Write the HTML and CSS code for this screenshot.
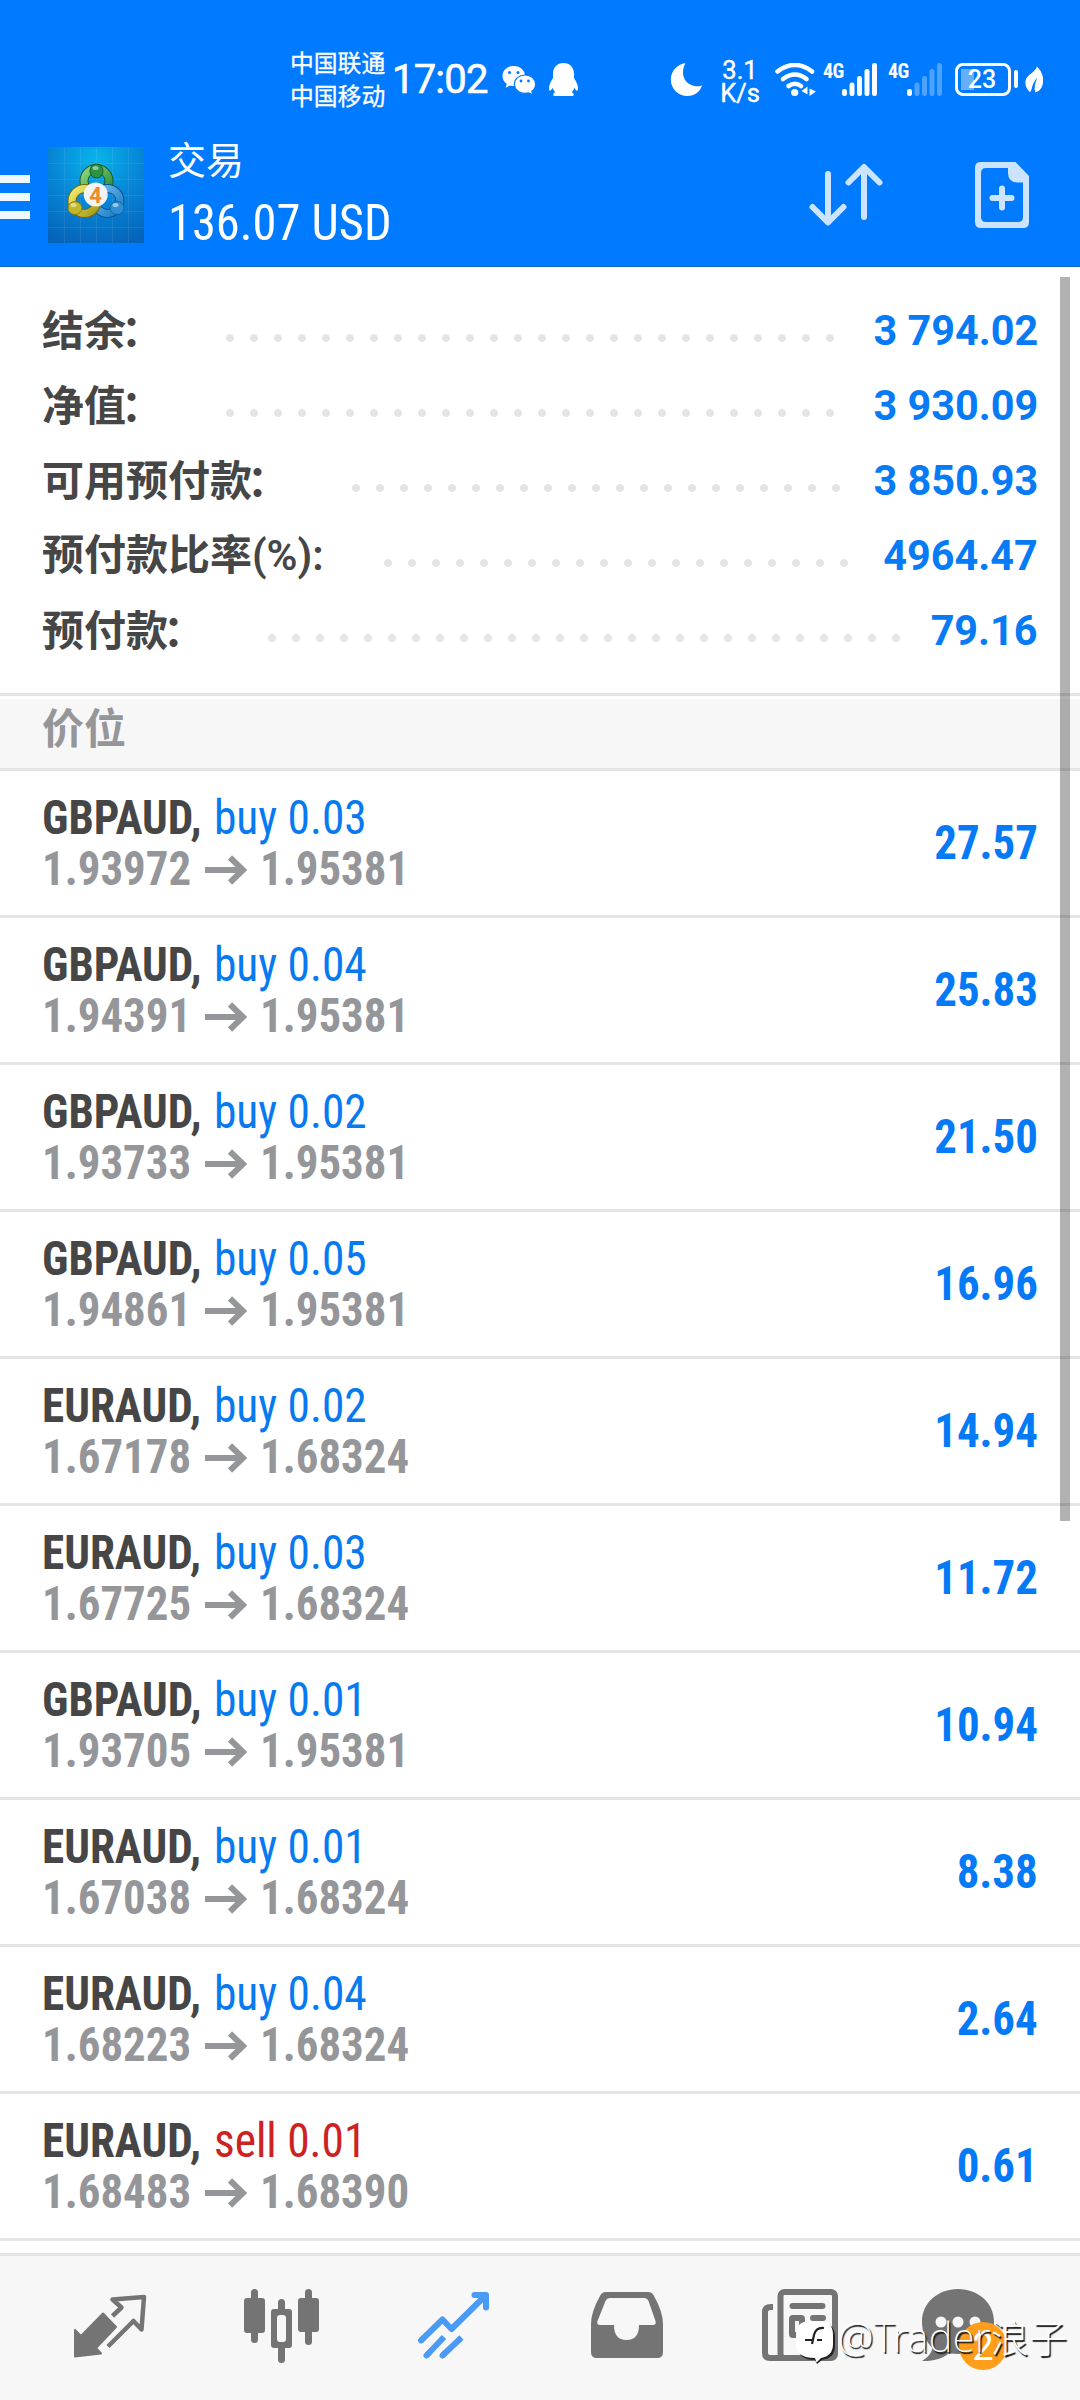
FILE: index.html
```html
<!DOCTYPE html>
<html lang="zh-CN">
<head>
<meta charset="utf-8">
<title>交易</title>
<link rel="stylesheet" href="styles.css">
</head>
<body>
<svg class="defs" width="0" height="0">
  <symbol id="arrow" viewBox="0 0 42 30"><path d="M0 15H38M25 2.5L38 15L25 27.5" fill="none" stroke="#95969a" stroke-width="6"/></symbol>
</svg>
<div class="screen">
  <header class="header">
    <div class="status">
      <div class="carriers"><span>中国联通</span><span>中国移动</span></div>
      <span class="clock">17:02</span>
      <svg class="wechat" width="34" height="30" viewBox="502 65 34 30">
        <path fill="#fff" d="M514 66c-6.500 0-11.500 4.400-11.500 10 0 3.200 1.600 6 4.200 7.800l-1 4 4.300-2.300c1.200.4 2.600.5 4 .5C520 86 525 81.500 525 76S520.300 66 514 66z"/>
        <path fill="#fff" stroke="#007aff" stroke-width="1.200" d="M525 75c-6 0-10.600 4-10.600 9.200S519 93.400 525 93.400c1.200 0 2.400-.2 3.500-.5l4.200 2-.9-3.600c2.400-1.700 3.800-4.200 3.800-7.100 0-5.200-4.700-9.200-10.600-9.200z"/>
        <g fill="#007aff"><circle cx="509.500" cy="72.500" r="1.500"/><circle cx="518" cy="72.500" r="1.500"/><circle cx="521" cy="81" r="1.400"/><circle cx="528.500" cy="81" r="1.400"/></g>
      </svg>
      <svg class="qq" width="30" height="34" viewBox="549 63 30 34">
        <path fill="#fff" d="M563.500 63c-6.500 0-10.500 4.500-10.500 11v4c-2 3-4 7-4 10 0 2 .5 3 1.200 2.700.9-.3 1.900-1.700 2.500-2.900.5 1.700 1.300 3.200 2.600 4.500-1.500.7-2.200 1.600-2 2.700.1.700.8 1 1.700 1h17c.9 0 1.600-.3 1.700-1 .2-1.100-.5-2-2-2.700 1.300-1.300 2.100-2.800 2.600-4.500.6 1.200 1.600 2.600 2.500 2.900.7.3 1.200-.7 1.200-2.700 0-3-2-7-4-10v-4c0-6.500-4-11-10.500-11z"/>
      </svg>
      <svg class="moon" width="32" height="34" viewBox="670 63 32 34"><path fill="#fff" d="M685.500 63c-8.500 1.500-14.700 8.200-14.700 16.700 0 9 7.400 16.300 16.600 16.300 7.300 0 13-4.200 14.600-10.800-2.200 1.200-4.300 1.300-6.500 1-7.700-1-12.800-7-12.500-14.200.1-3.300 1-6.300 2.500-9z"/></svg>
      <div class="speed"><span>3.1</span><span>K/s</span></div>
      <svg class="wifi" width="41" height="34" viewBox="775 63 41 34">
        <g fill="none" stroke="#fff" stroke-width="4.600" stroke-linecap="round"><path d="M777.500 71.500Q795 58.500 812 71.500"/><path d="M783 79Q795 70 806.500 79"/><path d="M788.500 86Q795 81.500 801 86"/></g>
        <circle cx="794.700" cy="92.500" r="3.600" fill="#fff"/><path fill="#fff" d="M807.500 86.500v8l-6-3.500zM809.500 88.500l6.500 3-6.500 4.500z"/>
      </svg>
      <span class="net">4G</span>
      <svg width="36" height="34" viewBox="842 63 36 34"><g fill="#fff"><rect x="842" y="89" width="5" height="7" rx="2.300"/><rect x="849.500" y="82.500" width="5" height="13.500" rx="2.300"/><rect x="857" y="76" width="5" height="20" rx="2.300"/><rect x="864.500" y="69" width="5" height="27" rx="2.300"/><rect x="872" y="63" width="5" height="33" rx="2.300"/></g></svg>
      <span class="net net2">4G</span>
      <svg width="36" height="34" viewBox="842 63 36 34"><rect x="842" y="89" width="5" height="7" rx="2.300" fill="#fff"/><g fill="#4da2ff"><rect x="849.500" y="82.500" width="5" height="13.500" rx="2.300"/><rect x="857" y="76" width="5" height="20" rx="2.300"/><rect x="864.500" y="69" width="5" height="27" rx="2.300"/><rect x="872" y="63" width="5" height="33" rx="2.300"/></g></svg>
      <div class="battery"><span>23</span></div>
      <i class="nub"></i>
      <svg class="leaf" width="18" height="28" viewBox="1025 66 18 28"><path fill="#fff" d="M1037 66.500c4 4 6.500 9 6.200 14.500-.3 6-3.500 10.500-8 11.300l-.6-3c.2-4 1-8 3-12-3.500 4-5.400 8-6.100 12.500l-1.500 2.500c-3.500-3.500-5-7-4.500-11.500.8-6 9.500-8 11.500-14.300z"/></svg>
    </div>
    <div class="toolbar">
      <div class="menu"><i></i><i></i><i></i></div>
      <svg class="logo" width="96" height="96" viewBox="48 147 96 96">
        <defs>
          <radialGradient id="bg" cx=".5" cy=".12" r=".95"><stop offset="0" stop-color="#08b4ea"/><stop offset=".5" stop-color="#0785d6"/><stop offset="1" stop-color="#0563b8"/></radialGradient>
          <linearGradient id="gr" x1="0" y1="0" x2="1" y2="1"><stop offset="0" stop-color="#8fd67e"/><stop offset="1" stop-color="#23883a"/></linearGradient>
          <linearGradient id="ye" x1="0" y1="0" x2="1" y2="1"><stop offset="0" stop-color="#f4ea6e"/><stop offset="1" stop-color="#a59b18"/></linearGradient>
          <linearGradient id="bl" x1="0" y1="0" x2="1" y2="1"><stop offset="0" stop-color="#6fbdf0"/><stop offset="1" stop-color="#1a7cc4"/></linearGradient>
        </defs>
        <path fill="url(#bg)" d="M48 147h96v96H48z"/>
        <path d="M64.500 147v96M80.500 147v96M96.500 147v96M112.500 147v96M128.500 147v96M48 163.500h96M48 179.500h96M48 195.500h96M48 211.500h96M48 227.500h96" stroke="#fff" stroke-opacity=".08"/>
        <g fill="none">
          <circle cx="96.500" cy="181" r="12.500" stroke="#175c2a" stroke-width="9"/><circle cx="96.500" cy="181" r="12.500" stroke="url(#gr)" stroke-width="7"/>
          <circle cx="107.500" cy="201" r="12.500" stroke="#124f86" stroke-width="9"/><circle cx="107.500" cy="201" r="12.500" stroke="url(#bl)" stroke-width="7"/>
          <circle cx="84.500" cy="201" r="12.500" stroke="#6f6a10" stroke-width="9"/><circle cx="84.500" cy="201" r="12.500" stroke="url(#ye)" stroke-width="7"/>
        </g>
        <ellipse cx="96.500" cy="171" rx="6.500" ry="7" fill="#2a9440" stroke="#175c2a"/>
        <ellipse cx="75" cy="208" rx="7" ry="6.500" fill="#c2b72b" stroke="#857d12"/>
        <ellipse cx="117" cy="208" rx="7" ry="6.500" fill="#2f8fd3" stroke="#1564a5"/>
        <g fill="#fff" fill-opacity=".5"><ellipse cx="95.500" cy="168" rx="3" ry="2"/><ellipse cx="73.500" cy="205" rx="3" ry="2"/><ellipse cx="115.500" cy="205" rx="3" ry="2"/></g>
        <circle cx="95.700" cy="194.500" r="12" fill="#f3f3f3"/>
        <text class="four" x="95.500" y="202.500" text-anchor="middle">4</text>
      </svg>
      <div class="titles"><span class="title">交易</span><span class="equity">136.07 USD</span></div>
      <svg class="sort" width="76" height="66" viewBox="808 162 76 66"><path d="M828 174V222M812.500 207L828 222.500L843.500 207M864 217V168M848.500 182.500L864 167L879.500 182.500" fill="none" stroke="#cce4ff" stroke-width="6" stroke-linecap="round" stroke-linejoin="round"/></svg>
      <svg class="add" width="56" height="68" viewBox="974 161 56 68"><path fill="#cce4ff" fill-rule="evenodd" d="M980 162h35.500L1029 176v46q0 6-6 6h-42q-6 0-6-6v-54q0-6 5-6zM986 168q-5 0-5 5v44q0 5 5 5h32q5 0 5-5v-34.500h-5q-10 0-10-9.500v-5z"/><path d="M1002 188.500v19M992.500 198h19" stroke="#cce4ff" stroke-width="6" stroke-linecap="round"/></svg>
    </div>
  </header>

  <main class="content">
    <i class="scrollbar"></i>
    <section class="summary">
      <div class="line"><span class="label">结余<span class="colon">：</span></span><i class="dots" style="width:624px"></i><b class="num">3 794.02</b></div>
      <div class="line"><span class="label">净值<span class="colon">：</span></span><i class="dots" style="width:624px"></i><b class="num">3 930.09</b></div>
      <div class="line"><span class="label">可用预付款<span class="colon">：</span></span><i class="dots" style="width:504px"></i><b class="num">3 850.93</b></div>
      <div class="line"><span class="label ratio">预付款比率<span class="latin">(%):</span></span><i class="dots" style="width:480px"></i><b class="num">4964.47</b></div>
      <div class="line"><span class="label">预付款<span class="colon">：</span></span><i class="dots" style="width:648px"></i><b class="num">79.16</b></div>
    </section>
    <h2 class="section">价位</h2>
    <ul class="list">
      <li><div><p><b class="sym">GBPAUD,</b><span class="buy">buy 0.03</span></p><p class="prices"><b class="open">1.93972</b><svg class="to"><use href="#arrow"/></svg><b>1.95381</b></p></div><b class="profit">27.57</b></li>
      <li><div><p><b class="sym">GBPAUD,</b><span class="buy">buy 0.04</span></p><p class="prices"><b class="open">1.94391</b><svg class="to"><use href="#arrow"/></svg><b>1.95381</b></p></div><b class="profit">25.83</b></li>
      <li><div><p><b class="sym">GBPAUD,</b><span class="buy">buy 0.02</span></p><p class="prices"><b class="open">1.93733</b><svg class="to"><use href="#arrow"/></svg><b>1.95381</b></p></div><b class="profit">21.50</b></li>
      <li><div><p><b class="sym">GBPAUD,</b><span class="buy">buy 0.05</span></p><p class="prices"><b class="open">1.94861</b><svg class="to"><use href="#arrow"/></svg><b>1.95381</b></p></div><b class="profit">16.96</b></li>
      <li><div><p><b class="sym">EURAUD,</b><span class="buy">buy 0.02</span></p><p class="prices"><b class="open">1.67178</b><svg class="to"><use href="#arrow"/></svg><b>1.68324</b></p></div><b class="profit">14.94</b></li>
      <li><div><p><b class="sym">EURAUD,</b><span class="buy">buy 0.03</span></p><p class="prices"><b class="open">1.67725</b><svg class="to"><use href="#arrow"/></svg><b>1.68324</b></p></div><b class="profit">11.72</b></li>
      <li><div><p><b class="sym">GBPAUD,</b><span class="buy">buy 0.01</span></p><p class="prices"><b class="open">1.93705</b><svg class="to"><use href="#arrow"/></svg><b>1.95381</b></p></div><b class="profit">10.94</b></li>
      <li><div><p><b class="sym">EURAUD,</b><span class="buy">buy 0.01</span></p><p class="prices"><b class="open">1.67038</b><svg class="to"><use href="#arrow"/></svg><b>1.68324</b></p></div><b class="profit">8.38</b></li>
      <li><div><p><b class="sym">EURAUD,</b><span class="buy">buy 0.04</span></p><p class="prices"><b class="open">1.68223</b><svg class="to"><use href="#arrow"/></svg><b>1.68324</b></p></div><b class="profit">2.64</b></li>
      <li><div><p><b class="sym">EURAUD,</b><span class="sell">sell 0.01</span></p><p class="prices"><b class="open">1.68483</b><svg class="to"><use href="#arrow"/></svg><b>1.68390</b></p></div><b class="profit">0.61</b></li>
    </ul>
  </main>

  <nav class="nav">
    <svg width="80" height="80" viewBox="70 2286 80 80"><path fill="#747474" stroke="#747474" stroke-width="2" stroke-linejoin="round" d="M75 2330l6 6 22-22.500 13 13.500-20 21 5 5.500-26 3z"/><path fill="none" stroke="#747474" stroke-width="4.500" stroke-linejoin="round" d="M112.500 2316l9-8.500-9-8 31.500-2.500-2.500 32.500-8-8.500-25.500 25.500"/></svg>
    <svg width="80" height="80" viewBox="241 2286 80 80"><g fill="#747474"><rect x="251" y="2289" width="7" height="54" rx="3.500"/><rect x="244" y="2298" width="21" height="35" rx="3"/><rect x="278" y="2299" width="7" height="64" rx="3.500"/><rect x="271" y="2309" width="21" height="39" rx="3"/><rect x="305" y="2289" width="7" height="56" rx="3.500"/><rect x="298" y="2298" width="21" height="34" rx="3"/></g><rect x="277" y="2315" width="9" height="27" rx="3" fill="#f7f7f7"/></svg>
    <svg width="80" height="80" viewBox="413 2286 80 80"><path fill="none" stroke="#4a9bf5" stroke-width="6" stroke-linejoin="round" d="M421 2340.500l21.500-21 9 9.500 34-33.500"/><path fill="none" stroke="#4a9bf5" stroke-width="6" stroke-linecap="round" stroke-linejoin="round" d="M474.500 2295h11.500v12.500M421 2340.500l2-2M426.500 2355.500l2-2M442.500 2355.500l2-2"/><path stroke="#4a9bf5" stroke-width="6" d="M426.500 2355.500l17.500-18.500M442.500 2355.500l19-18"/></svg>
    <svg width="80" height="80" viewBox="587 2286 80 80"><path fill="#747474" fill-rule="evenodd" d="M606 2292h42q4 0 6 4 9 16 9 28v28q0 6-6 6h-60q-6 0-6-6v-28q0-12 9-28 2-4 6-4zM610 2298q-3 0-4.500 3l-8 20q-1.200 4 2.500 4h14q0 15 12.500 15t12.500-15h14q3.500 0 2.500-4l-7-20q-1.500-3-4.500-3z"/></svg>
    <svg width="80" height="80" viewBox="760 2286 80 80"><g fill="none" stroke="#747474" stroke-width="6"><rect x="780.500" y="2292" width="54.500" height="66" rx="4"/><path d="M773 2307h-2q-6 0-6 5v41q0 5 5 5h14"/><rect x="792" y="2318" width="10" height="17" rx="1"/><path stroke-linecap="round" d="M792.500 2306h30M813 2318h10"/></g></svg>
    <div class="chat">
      <svg width="80" height="80" viewBox="919 2286 80 80"><path fill="#747474" d="M958 2289c20 0 36 14 36 32.500s-16 32.500-36 32.500c-3 0-6-.3-9-.8-6 5-14 8-27 7.800 5-3 9-7 10.500-13C926 2342 922 2332 922 2321.500 922 2303 938 2289 958 2289z"/><g fill="#f7f7f7"><circle cx="941" cy="2322" r="5.500"/><circle cx="958" cy="2322" r="5.500"/><circle cx="975" cy="2322" r="5.500"/></g></svg>
      <span class="badge">2</span>
    </div>
  </nav>
  <div class="watermark">
    <svg width="40" height="44" viewBox="795 2320 40 44"><path fill="#222" d="M811 2323h10q14 0 14 14v9q0 12-13 14l-5 4-2-4q-17 0-17-14v-9q0-14 13-14z"/><path fill="#fff" d="M810 2321h9q14 0 14 14v9q0 12-12 14l-4.500 4.500-1.500-4.500q-19 0-19-14v-9q0-14 14-14z"/><path d="M824 2328q-8-1-10 7l-2 9M805 2340h9M817 2340h5" fill="none" stroke="#222" stroke-width="2.200"/></svg>
    <span class="handle">@Trader<span class="cjk">浪子</span></span>
  </div>
</div>
</body>
</html>
```
FILE: styles.css
```css
* { box-sizing: border-box; margin: 0; padding: 0; }
body { background: #fff; font-family: Roboto, "Noto Sans CJK SC", sans-serif; }
svg { display: block; flex: none; }
.defs { position: absolute; }
.screen { position: relative; display: flex; flex-direction: column; width: 1080px; height: 2400px; overflow: hidden; background: #fff; }

.header { height: 267px; background: #007aff; border-bottom: 1px solid #1466b4; color: #fff; }
.status { display: flex; align-items: flex-start; height: 120px; padding: 63px 0 0 290px; }
.carriers { display: flex; flex-direction: column; width: 102px; margin-top: -18px; font: 400 23.800px/33px "Noto Sans CJK SC", sans-serif; -webkit-text-stroke: .3px #fff; }
.clock { width: 110px; margin-top: -4px; font-size: 40px; line-height: 42px; letter-spacing: -.800px; font-weight: 400; -webkit-text-stroke: .6px #fff; }
.wechat { margin-top: 2px; }
.qq { margin-left: 13px; }
.moon { margin-left: 91px; }
.speed { display: flex; flex-direction: column; width: 53px; margin: -4px 0 0 20px; font-size: 25.500px; line-height: 22.500px; text-align: center; padding-right: 17px; white-space: nowrap; -webkit-text-stroke: .4px #fff; }
.speed span { margin: 0 -4px; }
.net { width: 19px; margin: -3px 0 0 7px; font: 700 20px/22px "Roboto Condensed", sans-serif; white-space: nowrap; letter-spacing: -.5px; }
.net2 { margin-left: 10px; }
.battery { width: 56px; height: 33px; margin-left: 12px; border: 3px solid #fff; border-radius: 8px; background: linear-gradient(#66afff, #66afff) 3px 3px / 13px 21px no-repeat; font-size: 25px; line-height: 27px; font-weight: 500; text-align: center; }
.battery span { display: block; margin-right: 2px; }
.nub { width: 4px; height: 18px; margin: 7px 7px 0 3px; border-radius: 2px; background: #fff; }
.leaf { margin-top: 3px; }

.toolbar { display: flex; height: 147px; align-items: flex-start; }
.menu { display: flex; flex-direction: column; gap: 10px; width: 30px; margin-top: 55px; }
.menu i { height: 8px; background: #f0f8ff; }
.logo { margin: 27px 0 0 18px; }
.four { font: 700 22px Roboto, sans-serif; fill: #f08a2c; }
.titles { display: flex; flex-direction: column; width: 640px; padding: 10px 0 0 24px; white-space: nowrap; }
.title { font: 400 38px/56px "Noto Sans CJK SC", sans-serif; }
.equity { margin-top: 7px; font: 400 50.500px/60px "Roboto Condensed", sans-serif; transform: scaleX(.96); transform-origin: 0 50%; }
.sort { margin: 42px 90px 0 24px; }
.add { margin-top: 41px; }

.content { position: relative; flex: 1; }
.scrollbar { position: absolute; left: 1060px; top: 10px; width: 10px; height: 1244px; background: rgba(0, 0, 0, .3); }
.summary { height: 429px; padding-top: 25px; border-bottom: 3px solid #e5e5e5; }
.line { display: flex; align-items: center; height: 75px; padding: 0 42px 0 42px; }
.label { margin-right: 56px; padding-bottom: 4px; font: 700 42px/71px "Noto Sans CJK SC", sans-serif; color: #464646; white-space: nowrap; }
.colon { margin: 0 5px 0 -5px; }
.ratio { width: 284px; margin-top: 1px; }
.latin { font-family: Roboto, sans-serif; font-weight: 600; }
.dots { height: 8px; margin-top: 17px; background: radial-gradient(circle at 6px 4px, #e5e5e5 3.600px, transparent 4.300px) 0 0 / 24px 8px; }
.num { margin: 1px 0 0 auto; font-size: 42px; color: #077af5; transform: scaleX(.985); transform-origin: 100% 50%; }

.section { height: 72px; margin-top: 3px; padding-left: 42px; border-bottom: 3px solid #e5e5e5; background: #f7f7f7; font: 700 42px/54px "Noto Sans CJK SC", sans-serif; color: #95969a; }
.list { list-style: none; }
.list li { display: flex; justify-content: space-between; height: 147px; padding: 21px 42px 0 42px; border-bottom: 3px solid #e5e5e5; font: 400 48px/51px "Roboto Condensed", sans-serif; white-space: nowrap; }
.list p { display: flex; height: 51px; }
.sym { width: 172px; color: #464646; transform: scaleX(.94); transform-origin: 0 50%; }
.buy, .sell { transform: scaleX(.945); transform-origin: 0 50%; }
.buy { color: #077af0; }
.sell { color: #cc2222; }
.prices { color: #95969a; }
.prices b { transform: scaleX(.935); transform-origin: 0 50%; }
.open { width: 163px; }
.to { width: 42px; height: 30px; margin: 12px 13px 0 0; }
.profit { margin-top: 25px; color: #057af7; transform: scaleX(.935); transform-origin: 100% 50%; }

.nav { display: grid; grid-template-columns: 171px 172px 174px 173px 80px; grid-auto-flow: column; height: 147px; padding: 30px 0 0 70px; border-top: 3px solid #e5e5e5; background: #f7f7f7; }
.chat { position: relative; margin-left: -14px; }
.nav > :nth-child(5) { margin-right: 0; }
.chat { margin-left: 79px; }
.badge { position: absolute; left: 40px; top: 36px; width: 48px; height: 48px; border-radius: 50%; background: #ff9e1b; color: #fff; font-size: 38px; line-height: 50px; text-align: center; }
.watermark { position: absolute; left: 795px; top: 2320px; display: flex; }
.handle { margin: -11px 0 0 3px; font: 200 40px/54px "Noto Sans", sans-serif; letter-spacing: .4px; color: #fff; text-shadow: 1.500px 1.500px 1px #111; white-space: nowrap; }
.cjk { font: 300 38px/54px "Noto Sans CJK SC", sans-serif; }
```
